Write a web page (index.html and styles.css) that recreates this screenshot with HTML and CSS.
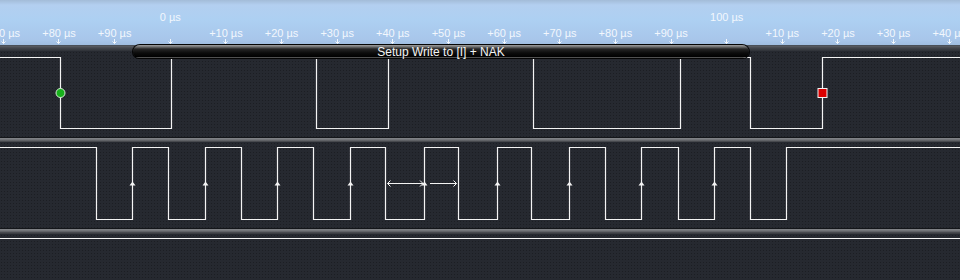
FILE: index.html
```html
<!DOCTYPE html>
<html lang="en">
<head>
    <meta charset="UTF-8">
    <title>Logic Capture</title>
    <link rel="stylesheet" href="styles.css">
</head>
<body>
    <div class="capture">
        <div class="ruler">
            <div class="tick"><span class="major"></span><span class="minor">+70 µs</span><svg class="mark" viewBox="0 0 5 5"><path d="M2.5 0V4.5M0.5 2.5L2.5 4.5L4.5 2.5"/></svg></div>
            <div class="tick"><span class="major"></span><span class="minor">+80 µs</span><svg class="mark" viewBox="0 0 5 5"><path d="M2.5 0V4.5M0.5 2.5L2.5 4.5L4.5 2.5"/></svg></div>
            <div class="tick"><span class="major"></span><span class="minor">+90 µs</span><svg class="mark" viewBox="0 0 5 5"><path d="M2.5 0V4.5M0.5 2.5L2.5 4.5L4.5 2.5"/></svg></div>
            <div class="tick"><span class="major">0 µs</span><span class="minor"></span><svg class="mark" viewBox="0 0 5 5"><path d="M2.5 0V4.5M0.5 2.5L2.5 4.5L4.5 2.5"/></svg></div>
            <div class="tick"><span class="major"></span><span class="minor">+10 µs</span><svg class="mark" viewBox="0 0 5 5"><path d="M2.5 0V4.5M0.5 2.5L2.5 4.5L4.5 2.5"/></svg></div>
            <div class="tick"><span class="major"></span><span class="minor">+20 µs</span><svg class="mark" viewBox="0 0 5 5"><path d="M2.5 0V4.5M0.5 2.5L2.5 4.5L4.5 2.5"/></svg></div>
            <div class="tick"><span class="major"></span><span class="minor">+30 µs</span><svg class="mark" viewBox="0 0 5 5"><path d="M2.5 0V4.5M0.5 2.5L2.5 4.5L4.5 2.5"/></svg></div>
            <div class="tick"><span class="major"></span><span class="minor">+40 µs</span><svg class="mark" viewBox="0 0 5 5"><path d="M2.5 0V4.5M0.5 2.5L2.5 4.5L4.5 2.5"/></svg></div>
            <div class="tick"><span class="major"></span><span class="minor">+50 µs</span><svg class="mark" viewBox="0 0 5 5"><path d="M2.5 0V4.5M0.5 2.5L2.5 4.5L4.5 2.5"/></svg></div>
            <div class="tick"><span class="major"></span><span class="minor">+60 µs</span><svg class="mark" viewBox="0 0 5 5"><path d="M2.5 0V4.5M0.5 2.5L2.5 4.5L4.5 2.5"/></svg></div>
            <div class="tick"><span class="major"></span><span class="minor">+70 µs</span><svg class="mark" viewBox="0 0 5 5"><path d="M2.5 0V4.5M0.5 2.5L2.5 4.5L4.5 2.5"/></svg></div>
            <div class="tick"><span class="major"></span><span class="minor">+80 µs</span><svg class="mark" viewBox="0 0 5 5"><path d="M2.5 0V4.5M0.5 2.5L2.5 4.5L4.5 2.5"/></svg></div>
            <div class="tick"><span class="major"></span><span class="minor">+90 µs</span><svg class="mark" viewBox="0 0 5 5"><path d="M2.5 0V4.5M0.5 2.5L2.5 4.5L4.5 2.5"/></svg></div>
            <div class="tick"><span class="major">100 µs</span><span class="minor"></span><svg class="mark" viewBox="0 0 5 5"><path d="M2.5 0V4.5M0.5 2.5L2.5 4.5L4.5 2.5"/></svg></div>
            <div class="tick"><span class="major"></span><span class="minor">+10 µs</span><svg class="mark" viewBox="0 0 5 5"><path d="M2.5 0V4.5M0.5 2.5L2.5 4.5L4.5 2.5"/></svg></div>
            <div class="tick"><span class="major"></span><span class="minor">+20 µs</span><svg class="mark" viewBox="0 0 5 5"><path d="M2.5 0V4.5M0.5 2.5L2.5 4.5L4.5 2.5"/></svg></div>
            <div class="tick"><span class="major"></span><span class="minor">+30 µs</span><svg class="mark" viewBox="0 0 5 5"><path d="M2.5 0V4.5M0.5 2.5L2.5 4.5L4.5 2.5"/></svg></div>
            <div class="tick"><span class="major"></span><span class="minor">+40 µs</span><svg class="mark" viewBox="0 0 5 5"><path d="M2.5 0V4.5M0.5 2.5L2.5 4.5L4.5 2.5"/></svg></div>
        </div>

        <div class="band band-top"></div>

        <!-- channel 0 : SDA -->
        <div class="channel ch-sda">
            <svg class="wave" viewBox="0 0 960 86">
                <path class="signal" d="M0 6.5H60.5V77.5H171.5V6.5H316.5V77.5H388.5V6.5H533.5V77.5H680.5V6.5H750.5V77.5H822.5V6.5H960"/>
                <circle class="start" cx="60.5" cy="42" r="4.5"/>
                <rect class="stop" x="818" y="37.5" width="9" height="9"/>
            </svg>
        </div>

        <div class="band"></div>

        <!-- channel 1 : SCL -->
        <div class="channel ch-scl">
            <svg class="wave" viewBox="0 0 960 86">
                <path class="signal" d="M0 5.5H96.5V77.5H132.5V5.5H168.5V77.5H205.5V5.5H241.5V77.5H277.5V5.5H313.5V77.5H350.5V5.5H385.5V77.5H424.5V5.5H458.5V77.5H497.5V5.5H531.5V77.5H569.5V5.5H605.5V77.5H641.5V5.5H678.5V77.5H714.5V5.5H750.5V77.5H786.5V5.5H960"/>
                <g class="edges">
                    <path d="M129.5 43.5H135.5L132.5 39.5Z"/>
                    <path d="M202.5 43.5H208.5L205.5 39.5Z"/>
                    <path d="M274.5 43.5H280.5L277.5 39.5Z"/>
                    <path d="M347.5 43.5H353.5L350.5 39.5Z"/>
                    <path d="M421.5 43.5H427.5L424.5 39.5Z"/>
                    <path d="M494.5 43.5H500.5L497.5 39.5Z"/>
                    <path d="M566.5 43.5H572.5L569.5 39.5Z"/>
                    <path d="M638.5 43.5H644.5L641.5 39.5Z"/>
                    <path d="M711.5 43.5H717.5L714.5 39.5Z"/>
                </g>
                <g class="measure">
                    <path d="M387.5 41.5H423M390.5 38.5L387.5 41.5L390.5 44.5M420 38.5L423 41.5L420 44.5"/>
                    <path d="M430 41.5H456.5M453.5 38.5L456.5 41.5L453.5 44.5"/>
                </g>
            </svg>
        </div>

        <div class="band band-low"></div>

        <!-- channel 2 -->
        <div class="channel ch-idle">
            <svg class="wave" viewBox="0 0 960 46">
                <path class="signal" d="M0 4.5H960"/>
            </svg>
        </div>

        <div class="frame-bar">Setup Write to [I] + NAK</div>
    </div>
</body>
</html>
```

FILE: styles.css
```css
body {
    margin: 0;
    overflow: hidden;
    background: #25282f;
}
.capture {
    position: relative;
    width: 960px;
    height: 280px;
    overflow: hidden;
    display: flex;
    flex-direction: column;
    font-family: "Liberation Sans", Arial, sans-serif;
}

/* time ruler */
.ruler {
    flex: none;
    height: 46px;
    display: flex;
    padding-left: 0;
    background: linear-gradient(#a3bcd8 0, #b3cff0 5px, #add0f2 20px, #a8c6ea 40px, #9fbde0 45px, #4a5058 45px, #4a5058 46px);
    overflow: hidden;
}
.tick {
    flex: none;
    width: 55.65px;
    display: flex;
    flex-direction: column;
    align-items: center;
    padding-top: 10px;
    color: #f2f7fd;
    font-size: 11px;
    white-space: nowrap;
}
.tick:first-child {
    margin-left: -24.475px;
}
.major {
    height: 14px;
    line-height: 14px;
}
.minor {
    height: 13px;
    line-height: 13px;
    margin-top: 3px;
}
.mark {
    width: 5px;
    height: 5px;
    margin-top: -1px;
    fill: none;
    stroke: #f2f7fd;
    stroke-width: 1;
}

/* separators between channels */
.band {
    flex: none;
    height: 5px;
    background: linear-gradient(#14161a 0, #14161a 1px, #85878b 1px, #6d6f73 3px, #3b3d42 5px);
}
.band-top {
    background: linear-gradient(#5b5e64 0, #43464c 2px, #2e3137 5px);
}
.band-low {
    height: 6px;
}

/* channel panes */
.channel {
    flex: none;
    height: 86px;
    background-color: #262930;
    background-image: radial-gradient(circle, #1c1e23 0.7px, transparent 1px);
    background-size: 3px 3px;
}
.ch-idle {
    flex: 1;
}
.wave {
    display: block;
    width: 960px;
    height: 100%;
}
.signal {
    fill: none;
    stroke: #f4f4f4;
    stroke-width: 1.2;
}
.start {
    fill: #17b21c;
    stroke: #d8ecd8;
    stroke-width: 1;
}
.stop {
    fill: #dc0000;
    stroke: #f4f4f4;
    stroke-width: 1;
}
.edges path {
    fill: #f4f4f4;
}
.measure path {
    fill: none;
    stroke: #f4f4f4;
    stroke-width: 1;
}

/* decoded frame label */
.frame-bar {
    position: absolute;
    left: 133px;
    top: 45px;
    width: 616px;
    height: 12px;
    padding-top: 0;
    box-sizing: content-box;
    border-bottom: 1px solid rgba(0, 0, 0, 0.45);
    border-radius: 7px 7px 6px 6px;
    background: linear-gradient(#a0a0a0 0, #6a6a6a 2px, #262626 4px, #0c0c0c 8px, #000 12px);
    box-shadow: 0 0 0 1px #050505;
    color: #f4f4f4;
    font-size: 12px;
    line-height: 14px;
    text-align: center;
    white-space: nowrap;
}
```
